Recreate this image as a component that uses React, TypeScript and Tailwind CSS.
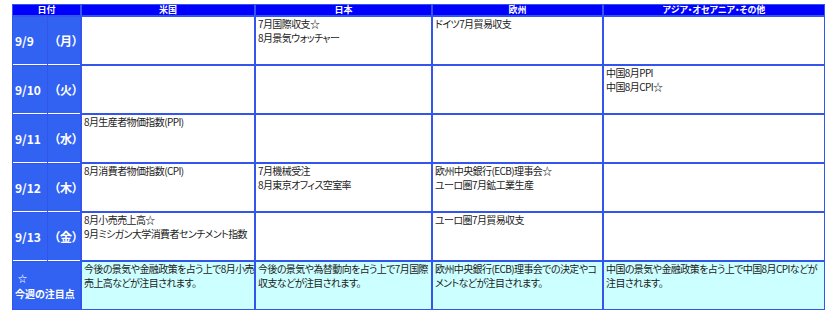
import React from "react";

const days = [
  { d: "9/9", w: "（月）", us: [] as string[], jp: ["7月国際収支☆", "8月景気ウォッチャー"], eu: ["ドイツ7月貿易収支"], as: [] as string[] },
  { d: "9/10", w: "（火）", us: [], jp: [], eu: [], as: ["中国8月PPI", "中国8月CPI☆"] },
  { d: "9/11", w: "（水）", us: ["8月生産者物価指数(PPI)"], jp: [], eu: [], as: [] },
  { d: "9/12", w: "（木）", us: ["8月消費者物価指数(CPI)"], jp: ["7月機械受注", "8月東京オフィス空室率"], eu: ["欧州中央銀行(ECB)理事会☆", "ユーロ圏7月鉱工業生産"], as: [] },
  { d: "9/13", w: "（金）", us: ["8月小売売上高☆", "9月ミシガン大学消費者センチメント指数"], jp: [], eu: ["ユーロ圏7月貿易収支"], as: [] },
];

const notes = [
  ["今後の景気や金融政策を占う上で8月小売", "売上高などが注目されます。"],
  ["今後の景気や為替動向を占う上で7月国際", "収支などが注目されます。"],
  ["欧州中央銀行(ECB)理事会での決定やコ", "メントなどが注目されます。"],
  ["中国の景気や金融政策を占う上で中国8月CPIなどが", "注目されます。"],
];

function Cell({ lines, cyan }: { lines: string[]; cyan?: boolean }) {
  return (
    <div
      className={`${cyan ? "bg-[#ccffff]" : "bg-white"} pl-[2px] text-[10px] leading-[14px] tracking-[-0.6px] text-[#222] whitespace-nowrap overflow-hidden [font-feature-settings:'palt']`}
    >
      {lines.map((l, i) => (
        <div key={i}>{l}</div>
      ))}
    </div>
  );
}

function Head({ children }: { children: React.ReactNode }) {
  return (
    <div className="bg-[#0000ff] text-white font-bold text-[9px] leading-[10px] flex items-center justify-center [font-feature-settings:'palt']">
      {children}
    </div>
  );
}

export default function App() {
  return (
    <div
      className="bg-white w-[833px] h-[315px] pt-[4px] pl-[12px]"
      style={{ fontFamily: '"Noto Sans CJK JP", "Noto Sans", sans-serif' }}
    >
      <div className="grid grid-cols-[67px_172px_175px_169px_220px] grid-rows-[10px_repeat(6,47px)] gap-[2px] p-px bg-[#3355ee] w-[813px]">
        <Head>日付</Head>
        <Head>米国</Head>
        <Head>日本</Head>
        <Head>欧州</Head>
        <Head>アジア・オセアニア・その他</Head>

        {days.map((r) => (
          <React.Fragment key={r.d}>
            <div className="flex gap-px text-white font-bold text-[12px] [font-feature-settings:'palt']">
              <div className="w-[34px] bg-[#3262f2] shadow-[0_1px_0_#fff] flex items-center pl-[2px]">
                {r.d}
              </div>
              <div className="flex-1 bg-[#3262f2] shadow-[0_1px_0_#fff] flex items-center pl-[6px]">
                {r.w}
              </div>
            </div>
            <Cell lines={r.us} />
            <Cell lines={r.jp} />
            <Cell lines={r.eu} />
            <Cell lines={r.as} />
          </React.Fragment>
        ))}

        <div className="bg-[#3262f2] text-white font-bold text-[10px] leading-[15px] flex flex-col justify-center pl-[2px] whitespace-nowrap [font-feature-settings:'palt']">
          <div className="pl-[3px] text-[9px]">☆</div>
          <div>今週の注目点</div>
        </div>
        {notes.map((n, i) => (
          <Cell key={i} lines={n} cyan />
        ))}
      </div>
    </div>
  );
}
